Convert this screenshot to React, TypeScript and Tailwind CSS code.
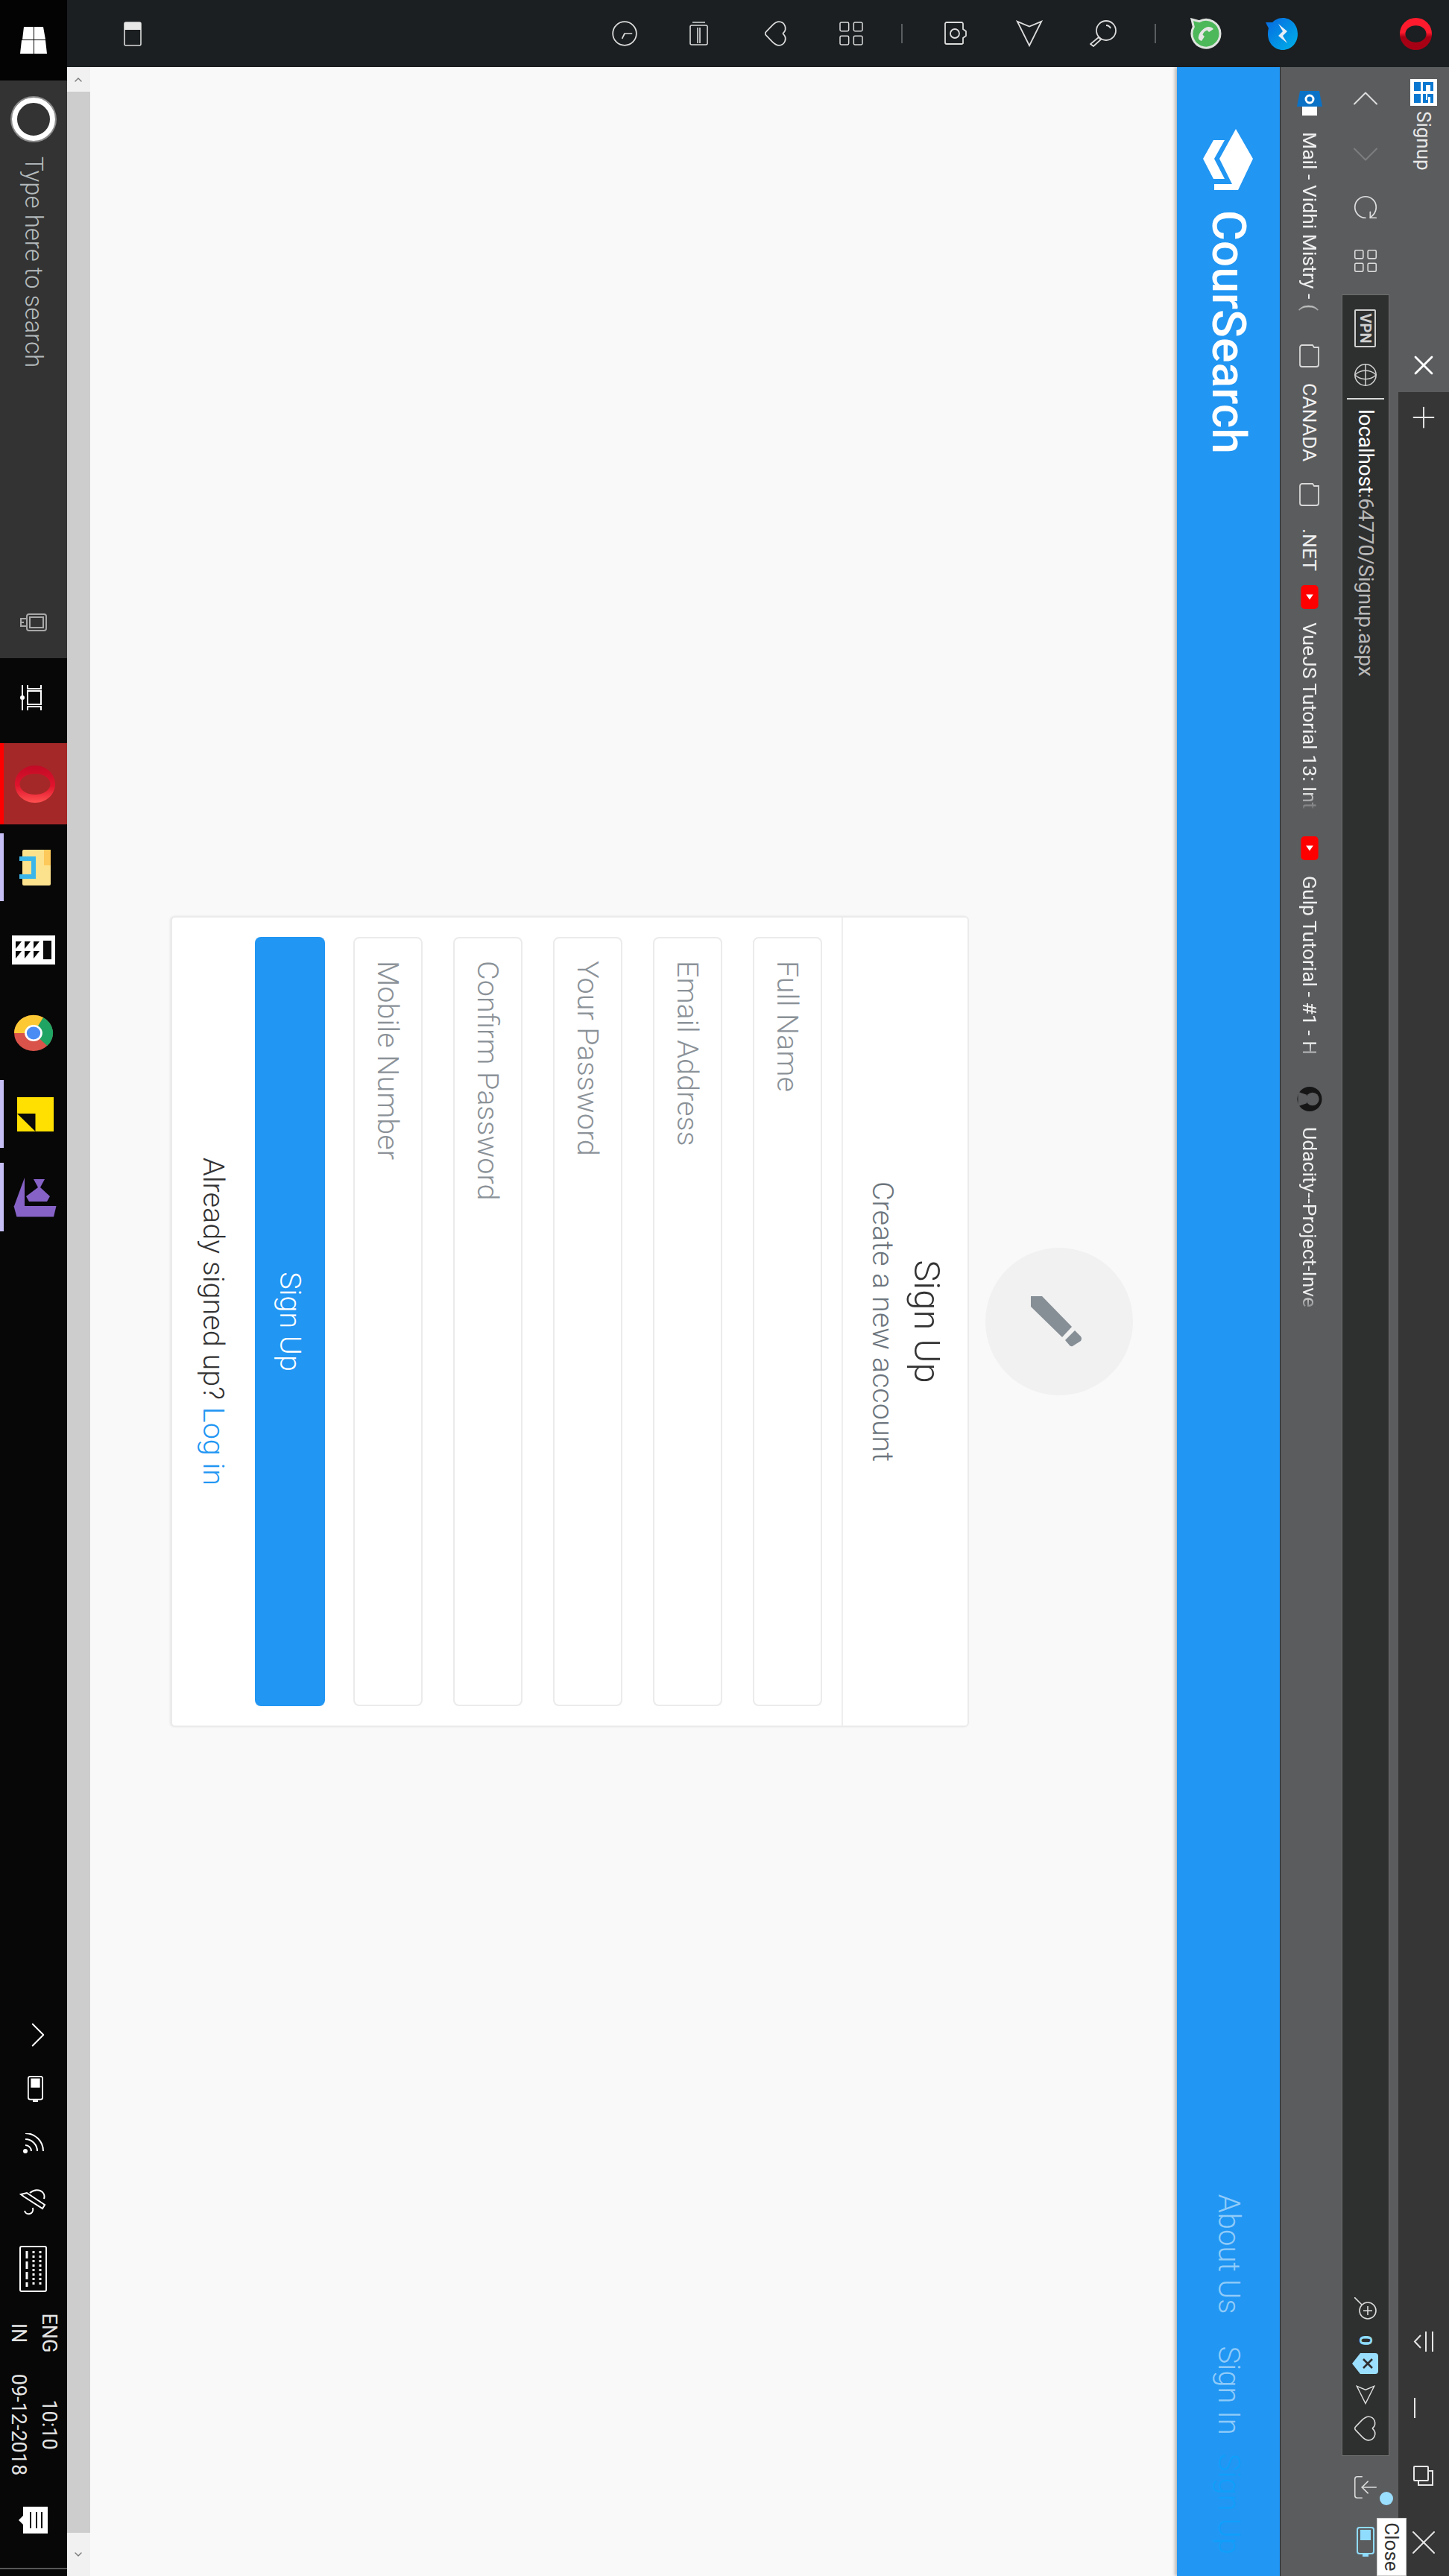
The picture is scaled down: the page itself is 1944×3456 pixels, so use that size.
import { Heart, Clock, LayoutGrid, RotateCw, X, Plus, ChevronLeft, ChevronRight, Globe, ChevronUp, Download } from 'lucide-react';

// the whole screen was shot sideways, so everything is laid out upright and turned once
function OperaLogo() {
    return (
        <svg width="45" height="45" viewBox="0 0 48 48">
            <defs>
                <linearGradient id="opera" x1="0" y1="0" x2="1" y2="0">
                    <stop offset="0.45" stopColor="#ff1b2d" />
                    <stop offset="0.6" stopColor="#a70014" />
                </linearGradient>
            </defs>
            <path fillRule="evenodd" fill="url(#opera)" d="M24 1a23 23 0 1 0 0 46a23 23 0 1 0 0-46zM24 9c7 0 12 7 12 15s-5 15-12 15s-12-7-12-15s5-15 12-15z" />
        </svg>
    );
}

function OperaTaskbar() {
    return (
        <svg width="50" height="54" viewBox="0 0 50 54">
            <defs>
                <linearGradient id="opera2" x1="0" y1="0" x2="1" y2="0">
                    <stop offset="0" stopColor="#c20a26" />
                    <stop offset="0.55" stopColor="#e0142c" />
                    <stop offset="1" stopColor="#ff5050" />
                </linearGradient>
            </defs>
            <path fillRule="evenodd" fill="url(#opera2)" d="M25 0C11 0 0 12 0 27s11 27 25 27s25-12 25-27S39 0 25 0zM25 6.500c8 0 14 9 14 20.500s-6 20.500-14 20.500s-14-9-14-20.500s6-20.500 14-20.500z" />
        </svg>
    );
}

function WhatsappIcon() {
    return (
        <svg width="42" height="42" viewBox="0 0 42 42">
            <path d="M21 2a19 19 0 1 1-9 35.700L2 40l2.600-10A19 19 0 0 1 21 2z" fill="#4cb85a" stroke="#dfe3df" strokeWidth="3" />
            <path d="M15 11l4 6-2.500 2.500c1 3 3 5 6 6L25 23l6 4c-1 3-3 5-6 4-6-1-12-7-13-13 0-3 1-6 3-7z" fill="#e6e6e6" />
        </svg>
    );
}

function MessengerIcon() {
    return (
        <svg width="45" height="45" viewBox="0 0 45 45">
            <defs>
                <linearGradient id="msgr" x1="0" y1="1" x2="1" y2="0">
                    <stop offset="0" stopColor="#0668e1" />
                    <stop offset="1" stopColor="#00b2e8" />
                </linearGradient>
            </defs>
            <path d="M22.500 1C10 1 1 10 1 21c0 6 3 11 6 14v9l8-4c2 .7 5 1 7.500 1C35 41 44 32 44 21S35 1 22.500 1z" fill="url(#msgr)" />
            <path d="M9 27l10-12 6 6 10-6-10 12-6-6z" fill="#e8eef6" />
        </svg>
    );
}

function SendIcon({ w, h }: { w: number; h: number }) {
    return (
        <svg width={w} height={h} viewBox="0 0 38 38" fill="none" stroke="#dcdcdc" strokeWidth="2">
            <path d="M2 2L36 19L2 36L9 19Z" />
        </svg>
    );
}

function SearchIcon() {
    return (
        <svg width="36" height="36" viewBox="0 0 36 36" fill="none" stroke="#dcdcdc" strokeWidth="1.800">
            <circle cx="14" cy="14" r="13" />
            <path d="M7 14a7 7 0 0 1 4-6" />
            <path d="M23 24l3-3 9 10-3 4z" />
        </svg>
    );
}

function CameraIcon() {
    return (
        <svg width="32" height="30" viewBox="0 0 32 30" fill="none" stroke="#dcdcdc" strokeWidth="1.800">
            <path d="M3 5h7l3-4h6l3 4h7a2 2 0 0 1 1 2v20a2 2 0 0 1-2 2H3a2 2 0 0 1-2-2V7a2 2 0 0 1 2-2z" />
            <circle cx="16" cy="16" r="6" />
        </svg>
    );
}

function NoteIcon() {
    return (
        <svg width="32" height="25" viewBox="0 0 32 25" fill="none" stroke="#dcdcdc" strokeWidth="1.600">
            <rect x="5" y="1" width="26" height="23" rx="2" />
            <path d="M1 4v17M8 11h21M8 14h21" />
        </svg>
    );
}

function PanelIcon() {
    return (
        <svg width="33" height="24" viewBox="0 0 33 24" fill="none" stroke="#dcdcdc" strokeWidth="1.600">
            <rect x="1" y="1" width="31" height="22" rx="2" />
            <rect x="1" y="1" width="10" height="22" fill="#e8e8e8" stroke="none" />
        </svg>
    );
}

function DeviceIcon({ w, h, color }: { w: number; h: number; color: string }) {
    return (
        <svg width={w} height={h} viewBox="0 0 40 24" fill="none" stroke={color} strokeWidth="2">
            <rect x="1" y="1" width="35" height="22" rx="3" />
            <rect x="4" y="5" width="14" height="14" fill={color} stroke="none" />
            <rect x="37" y="8" width="3" height="8" fill={color} stroke="none" />
        </svg>
    );
}

function Sidebar() {
    return (
        <div className="w-[90px] flex flex-col items-center bg-[#1b1f21] text-[#dcdcdc]">
            <div className="mt-[22px]"><OperaLogo /></div>
            <div className="mt-[135px]"><MessengerIcon /></div>
            <div className="mt-[58px]"><WhatsappIcon /></div>
            <div className="mt-[46px] h-[2px] w-[26px] bg-[#5a5d5f]" />
            <div className="mt-[51px]"><SearchIcon /></div>
            <div className="mt-[62px]"><SendIcon w={36} h={38} /></div>
            <div className="mt-[65px]"><CameraIcon /></div>
            <div className="mt-[56px] h-[2px] w-[26px] bg-[#5a5d5f]" />
            <LayoutGrid size={40} strokeWidth={0.900} className="mt-[47px]" />
            <Heart size={38} strokeWidth={1.100} className="mt-[62px]" />
            <div className="mt-[72px]"><NoteIcon /></div>
            <Clock size={38} strokeWidth={1.100} className="mt-[68px]" />
            <div className="mt-auto mb-[76px]"><PanelIcon /></div>
        </div>
    );
}

function TabStrip() {
    return (
        <div className="h-[68px] flex items-center bg-[#363636] text-white">
            <div className="w-[436px] h-full flex items-center bg-[#5b5c5e] pl-[16px]">
                <svg width="36" height="36" viewBox="0 0 36 36" className="shrink-0">
                    <rect width="36" height="36" fill="#fff" />
                    <path d="M4 5h12v4h-8v6h8v4H4zM20 5h12v4h-8v3h8v7H20v-4h8v-2h-8z" fill="#0a78d0" />
                    <path d="M4 22h12v9H4zM20 22h12v9H20z" fill="#0a78d0" />
                </svg>
                <span className="ml-[7px] text-[26px] font-['Roboto',sans-serif] text-[#e8e8e8]">Signup</span>
                <X size={44} strokeWidth={1.500} className="ml-auto mr-[14px] text-white" />
            </div>
            <Plus size={46} strokeWidth={1} className="ml-[11px] text-[#e6e6e6]" />
            <div className="ml-auto w-[328px] h-full flex items-center text-[#e6e6e6]">
                <svg width="27" height="28" viewBox="0 0 27 28" fill="none" stroke="#e6e6e6" strokeWidth="2">
                    <path d="M0 2h27M0 11h27M5 18l8.500 8 8.500-8" />
                </svg>
                <div className="ml-[62px] mt-[24px] h-[2px] w-[27px] bg-[#e6e6e6]" />
                <svg width="27" height="27" viewBox="0 0 27 27" fill="none" stroke="#e6e6e6" strokeWidth="2" className="ml-[64px]">
                    <rect x="1" y="7" width="19" height="19" rx="1" />
                    <path d="M7 7V1h19v19h-6" />
                </svg>
                <X size={56} strokeWidth={0.850} className="ml-[48px]" />
            </div>
        </div>
    );
}

function YouTubeDot() {
    return (
        <svg width="32" height="24" viewBox="0 0 33 24" className="shrink-0">
            <rect width="33" height="24" rx="5" fill="#ff0000" />
            <path d="M13 7l7 5-7 5z" fill="#fff" />
        </svg>
    );
}

function FolderIcon() {
    return (
        <svg width="31" height="27" viewBox="0 0 31 27" fill="none" stroke="#d8d8d8" strokeWidth="1.800" className="shrink-0">
            <path d="M4 1h23a3 3 0 0 1 3 3v19a3 3 0 0 1-3 3H4a3 3 0 0 1-3-3V9l3-2z" />
        </svg>
    );
}

const fade = "whitespace-nowrap [mask-image:linear-gradient(to_right,black_88%,transparent_99%)]";

function Toolbar() {
    return (
        <div className="h-[159px] flex flex-col bg-[#5b5c5e] border-b-[1px] border-[#1f2a33]">
            <div className="mt-[12px] h-[64px] flex items-center text-[#dcdcdc]">
                <ChevronLeft size={60} strokeWidth={0.800} className="ml-[12px]" />
                <ChevronRight size={60} strokeWidth={0.800} className="ml-[15px] text-[#7d7e80]" />
                <RotateCw size={38} strokeWidth={1.100} className="ml-[22px]" />
                <LayoutGrid size={38} strokeWidth={1} className="ml-[34px]" />
                <div className="ml-[26px] flex-1 h-[64px] flex items-center bg-[#2e2f2f] border border-[#6e6e6e] pl-[19px]">
                    <div className="h-[29px] w-[51px] rounded-[2px] border-2 border-[#cfcfcf] flex items-center justify-center text-[20px] font-bold leading-none text-[#cfcfcf] font-['Roboto',sans-serif]">VPN</div>
                    <Globe size={34} strokeWidth={1.100} className="ml-[20px] text-[#cfcfcf]" />
                    <div className="ml-[14px] h-[50px] w-[2px] bg-[#d8d8d8]" />
                    <span className="ml-[13px] text-[28px] tracking-[-0.2px] text-[#b9b9b9] font-['Roboto',sans-serif]"><span className="text-white">localhost</span>:64770/Signup.aspx</span>
                    <div className="ml-auto mr-[17px] flex items-center">
                        <svg width="30" height="30" viewBox="0 0 30 30" fill="none" stroke="#dcdcdc" strokeWidth="1.600">
                            <circle cx="18" cy="12" r="11" />
                            <path d="M18 6v12M12 12h12M0 30l10-10" />
                        </svg>
                        <span className="ml-[21px] w-[13px] text-[24px] leading-none font-bold text-[#8fdcff] font-['Roboto',sans-serif]">0</span>
                        <svg width="28" height="35" viewBox="0 0 28 35" className="ml-[11px]">
                            <path d="M4 0h20a4 4 0 0 1 4 4v20L14 35 0 24V4a4 4 0 0 1 4-4z" fill="#9bdfff" />
                            <path d="M8 8l12 12M20 8L8 20" stroke="#2e2f2f" strokeWidth="2.600" />
                        </svg>
                        <div className="ml-[13px] flex"><SendIcon w={30} h={26} /></div>
                        <Heart size={38} strokeWidth={1} className="ml-[11px]" />
                    </div>
                </div>
                <div className="relative ml-[23px] flex">
                    <Download size={38} strokeWidth={1} />
                    <div className="absolute left-[25px] -top-[18px] h-[18px] w-[18px] rounded-full bg-[#9bdfff]" />
                </div>
                <div className="ml-[34px] mr-[26px] flex"><DeviceIcon w={40} h={24} color="#8fdcff" /></div>
            </div>
            <div className="mt-[25px] h-[36px] flex items-center text-[26.500px] text-[#efefef] font-['Roboto',sans-serif]">
                <svg width="33" height="34" viewBox="0 0 33 34" className="ml-[32px] shrink-0">
                    <path d="M0 4L21 0v34L0 30z" fill="#0a72c6" />
                    <rect x="21" y="7" width="12" height="20" fill="#fff" />
                    <circle cx="11" cy="17" r="5" fill="none" stroke="#fff" strokeWidth="3" />
                </svg>
                <span className={`ml-[22px] w-[255px] ${fade}`}>Mail - Vidhi Mistry - (</span>
                <div className="ml-[30px] flex"><FolderIcon /></div>
                <span className="ml-[21px] w-[106px]">CANADA</span>
                <div className="ml-[28px] flex"><FolderIcon /></div>
                <span className="ml-[30px] w-[47px]">.NET</span>
                <div className="ml-[29px] flex"><YouTubeDot /></div>
                <span className={`ml-[18px] w-[256px] ${fade}`}>VueJS Tutorial 13: Int</span>
                <div className="ml-[31px] flex"><YouTubeDot /></div>
                <span className={`ml-[21px] w-[253px] ${fade}`}>Gulp Tutorial - #1 - H</span>
                <svg width="35" height="36" viewBox="0 0 36 36" className="ml-[29px] shrink-0">
                    <circle cx="18" cy="18" r="17" fill="#161616" />
                    <circle cx="18" cy="14" r="9" fill="#5b5c5e" />
                    <path d="M8 34l4-12h12l4 12z" fill="#5b5c5e" />
                </svg>
                <span className={`ml-[20px] w-[253px] ${fade}`}>Udacity--Project-Inve</span>
            </div>
        </div>
    );
}

function Navbar() {
    return (
        <nav className="relative h-[138px] flex items-center bg-[#2196f3] shadow-[0_3px_4px_rgba(0,0,0,0.25)] font-['Roboto',sans-serif]">
            <svg width="82" height="69" viewBox="0 0 82 69" fill="#fff" className="ml-[83px]">
                <path d="M0 24L40 1L82 21V53H74V29L40 46Z" />
                <path d="M40 68L15 54V39L40 53L67 39V54Z" />
            </svg>
            <span className="ml-[27px] text-[62.500px] font-medium text-white">CourSearch</span>
            <div className="ml-auto flex text-[40px] font-light mr-[29px]">
                <span className="text-[#90cbf9]">About Us</span>
                <span className="ml-[43px] text-[#90cbf9]">Sign In</span>
                <span className="ml-[25px] text-[#0f9ffb]">Sign Up</span>
            </div>
        </nav>
    );
}

function Field({ placeholder, type = 'text' }: { placeholder: string; type?: string }) {
    return (
        <input
            type={type}
            placeholder={placeholder}
            className="h-[93px] w-full rounded-[8px] border-2 border-[#ebebeb] bg-white px-[30px] text-[39.600px] font-light outline-none placeholder:text-[#8b9298]"
        />
    );
}

function SignupCard() {
    return (
        <div className="flex-1 flex flex-col items-center pt-[59px] font-['Roboto',sans-serif]">
            <div className="h-[198px] w-[198px] pt-[8px] rounded-full bg-[#f1f1f1] flex items-center justify-center">
                <svg width="68" height="68" viewBox="0 0 68 68" fill="#868e96">
                    <path d="M0 68V53L41 13L55 26L14 68Z" />
                    <path d="M46 9L54 1Q57-1 60 1L67 12Q68 14 66 16L59 22Z" />
                </svg>
            </div>
            <div className="mt-[22px] w-[1088px] h-[1071px] rounded-[6px] border-2 border-[#ebebeb] bg-white shadow-[0_1px_3px_rgba(0,0,0,0.08)] flex flex-col">
                <div className="h-[169px] pb-[5px] border-b-2 border-[#eeeeee] flex flex-col items-center justify-center text-center">
                    <h2 className="mb-[3px] text-[49px] font-light leading-[62px] text-[#333]">Sign Up</h2>
                    <p className="text-[39.600px] font-light leading-[50px] text-[#6c757d]">Create a new account</p>
                </div>
                <div className="mt-[26px] px-[26px] flex flex-col gap-[41px]">
                    <Field placeholder="Full Name" />
                    <Field placeholder="Email Address" type="email" />
                    <Field placeholder="Your Password" type="password" />
                    <Field placeholder="Confirm Password" type="password" />
                    <Field placeholder="Mobile Number" />
                    <button className="-mt-[3px] h-[94px] rounded-[8px] bg-[#2196f3] text-[39.600px] font-light text-white">Sign Up</button>
                </div>
                <p className="flex-1 flex items-center justify-center text-[39.600px] font-light text-[#333]">
                    <span>Already signed up? <a className="text-[#2196f3]">Log in</a></span>
                </p>
            </div>
        </div>
    );
}

function Tray() {
    return (
        <div className="ml-auto w-[755px] h-full flex items-center shrink-0">
            <ChevronUp size={58} strokeWidth={0.800} className="text-white -mt-[12px]" />
            <div className="ml-[26px] flex -mt-[6px]"><DeviceIcon w={35} h={21} color="#fff" /></div>
            <svg width="28" height="29" viewBox="0 0 28 29" fill="none" stroke="#fff" strokeWidth="2" className="ml-[42px]">
                <path d="M16 25A8 8 0 0 1 24 17M8 25A16 16 0 0 1 24 9M0 25A24 24 0 0 1 24 1" />
                <circle cx="24" cy="25" r="3" fill="#fff" stroke="none" />
            </svg>
            <svg width="37" height="38" viewBox="0 0 37 38" fill="none" stroke="#fff" strokeWidth="2" className="ml-[46px]">
                <path d="M8 36l-2-8L22 4l5 3-16 25z" />
                <path d="M6 24C-2 14 4 2 14 5" />
                <path d="M26 20c9-2 11 9 4 11" />
            </svg>
            <svg width="62" height="37" viewBox="0 0 62 37" fill="none" stroke="#fff" strokeWidth="2" className="ml-[40px]">
                <rect x="1" y="1" width="60" height="35" rx="2" />
                <path d="M7 9h48M7 18h48" strokeWidth="3" strokeDasharray="3 3" />
                <path d="M7 27h48" strokeWidth="3" strokeDasharray="10 4" />
            </svg>
            <div className="ml-[25px] w-[60px] flex flex-col items-center text-[27px] leading-[41px]">
                <span>ENG</span>
                <span>IN</span>
            </div>
            <div className="ml-[23px] w-[140px] flex flex-col items-center text-[27px] leading-[41px]">
                <span>10:10</span>
                <span className="whitespace-nowrap">09-12-2018</span>
            </div>
            <svg width="36" height="39" viewBox="0 0 36 39" className="ml-[40px]">
                <path d="M0 0h36v33H24l-6 6-6-6H0z" fill="#fff" />
                <path d="M7 8h22M7 15h22M7 23h22" stroke="#0a0a0a" strokeWidth="2" />
            </svg>
            <div className="ml-[46px] h-full w-[2px] bg-[#555]" />
        </div>
    );
}

function Taskbar() {
    return (
        <div className="h-[90px] flex items-center bg-[#070707] text-[#e4e4e4] font-['Roboto',sans-serif]">
            <div className="w-[108px] h-full flex items-center justify-center bg-[#030303]">
                <svg width="36" height="36" viewBox="0 0 36 36" fill="#fff">
                    <path d="M0 5l17-3v15H0zM18 2l18-2v17H18zM0 18h17v15L0 31zM18 18h18v18l-18-2z" />
                </svg>
            </div>
            <div className="w-[775px] h-full flex items-center bg-[#333333] pl-[23px]">
                <div className="h-[58px] w-[58px] rounded-full border-[7px] border-white shadow-[0_0_0_2px_#8a8a8a]" />
                <span className="ml-[21px] text-[33px] font-light text-[#b5bbbd]">Type here to search</span>
                <svg width="30" height="36" viewBox="0 0 30 36" fill="none" stroke="#a8a8a8" strokeWidth="2" className="ml-auto mr-[33px]">
                    <rect x="4" y="1" width="22" height="26" rx="3" />
                    <rect x="8" y="5" width="14" height="18" />
                    <path d="M10 27v8h10v-8M15 35v-4" />
                </svg>
            </div>
            <svg width="36" height="36" viewBox="0 0 36 36" fill="none" stroke="#fff" strokeWidth="2" className="ml-[35px]">
                <rect x="9" y="8" width="18" height="18" />
                <path d="M1 8h5v18H1M35 8h-5v18h5M1 33h14M21 33h14" />
                <circle cx="18" cy="33" r="2" fill="#fff" />
            </svg>
            <div className="ml-[43px] w-[109px] h-full flex items-center justify-center bg-[#a52828] border-b-[5px] border-[#ff0000]"><OperaTaskbar /></div>
            <div className="ml-[12px] w-[91px] h-full flex items-center justify-center border-b-[5px] border-[#c5bff5]">
                <svg width="48" height="42" viewBox="0 0 48 42">
                    <rect y="0" width="48" height="38" rx="2" fill="#fde28e" />
                    <path d="M0 0h21v9H0z" fill="#fdc95a" />
                    <path d="M9 42V20h30v22h-6V26H15v16z" fill="#3bb6ea" />
                </svg>
            </div>
            <div className="ml-[46px] flex">
                <svg width="39" height="58" viewBox="0 0 39 58">
                    <rect width="39" height="58" fill="#fff" />
                    <rect x="7" y="5" width="25" height="11" fill="#0a0a0a" />
                    <path d="M8 21l10 8H8zM21 21l10 8H21zM8 33l10 8H8zM21 33l10 8H21zM8 45l10 8H8zM21 45l10 8H21z" fill="#0a0a0a" />
                </svg>
            </div>
            <div className="ml-[67px] flex">
                <svg width="50" height="54" viewBox="0 0 50 50" preserveAspectRatio="none">
                    <circle cx="25" cy="25" r="24" fill="#d9534a" />
                    <path d="M25 25L4 13a24 24 0 0 1 38-5z" fill="#1fa463" />
                    <path d="M25 25L4 13a24 24 0 0 0 21 36z" fill="#fcc934" />
                    <circle cx="25" cy="25" r="11" fill="#fff" />
                    <circle cx="25" cy="25" r="8.500" fill="#4b8bf4" />
                </svg>
            </div>
            <div className="ml-[38px] w-[91px] h-full flex items-center justify-center border-b-[5px] border-[#c5bff5]">
                <svg width="46" height="49" viewBox="0 0 46 49">
                    <rect width="46" height="49" fill="#ffe000" />
                    <path d="M22 49V24.500H46z" fill="#0a0a0a" />
                </svg>
            </div>
            <div className="ml-[20px] w-[92px] h-full flex items-center justify-center border-b-[5px] border-[#c5bff5]">
                <svg width="53" height="58" viewBox="0 0 53 58" fill="#8662c7">
                    <path d="M38 57.500V0.500L52.500 4V53.600z" />
                    <path d="M0 43L38 57V43z" />
                    <path d="M2 31V16L13 22L25 9L32 13V37L25 41L13 25z" />
                </svg>
            </div>
            <Tray />
        </div>
    );
}

export default function App() {
    return (
        <div className="w-[1944px] h-[3456px] overflow-hidden">
            <div className="w-[3456px] h-[1944px] origin-top-left rotate-90 translate-x-[1944px] flex flex-col">
                <div className="flex-1 flex min-h-0">
                    <Sidebar />
                    <div className="relative flex-1 flex flex-col bg-[#f9f9f9]">
                        <TabStrip />
                        <Toolbar />
                        <Navbar />
                        <SignupCard />
                        <div className="h-[31px] flex bg-[#cdcdcd]">
                            <div className="w-[33px] flex items-center justify-center bg-[#f1f1f1] text-[#777]"><ChevronLeft size={16} /></div>
                            <div className="ml-auto w-[58px] flex items-center justify-center bg-[#f1f1f1] text-[#777]"><ChevronRight size={16} /></div>
                        </div>
                        <div className="absolute right-0 top-[57px] w-[78px] h-[40px] flex items-center justify-center bg-white border border-[#ccc] text-[26px] leading-none text-[#333] font-['Roboto',sans-serif]">Close</div>
                    </div>
                </div>
                <Taskbar />
            </div>
        </div>
    );
}
